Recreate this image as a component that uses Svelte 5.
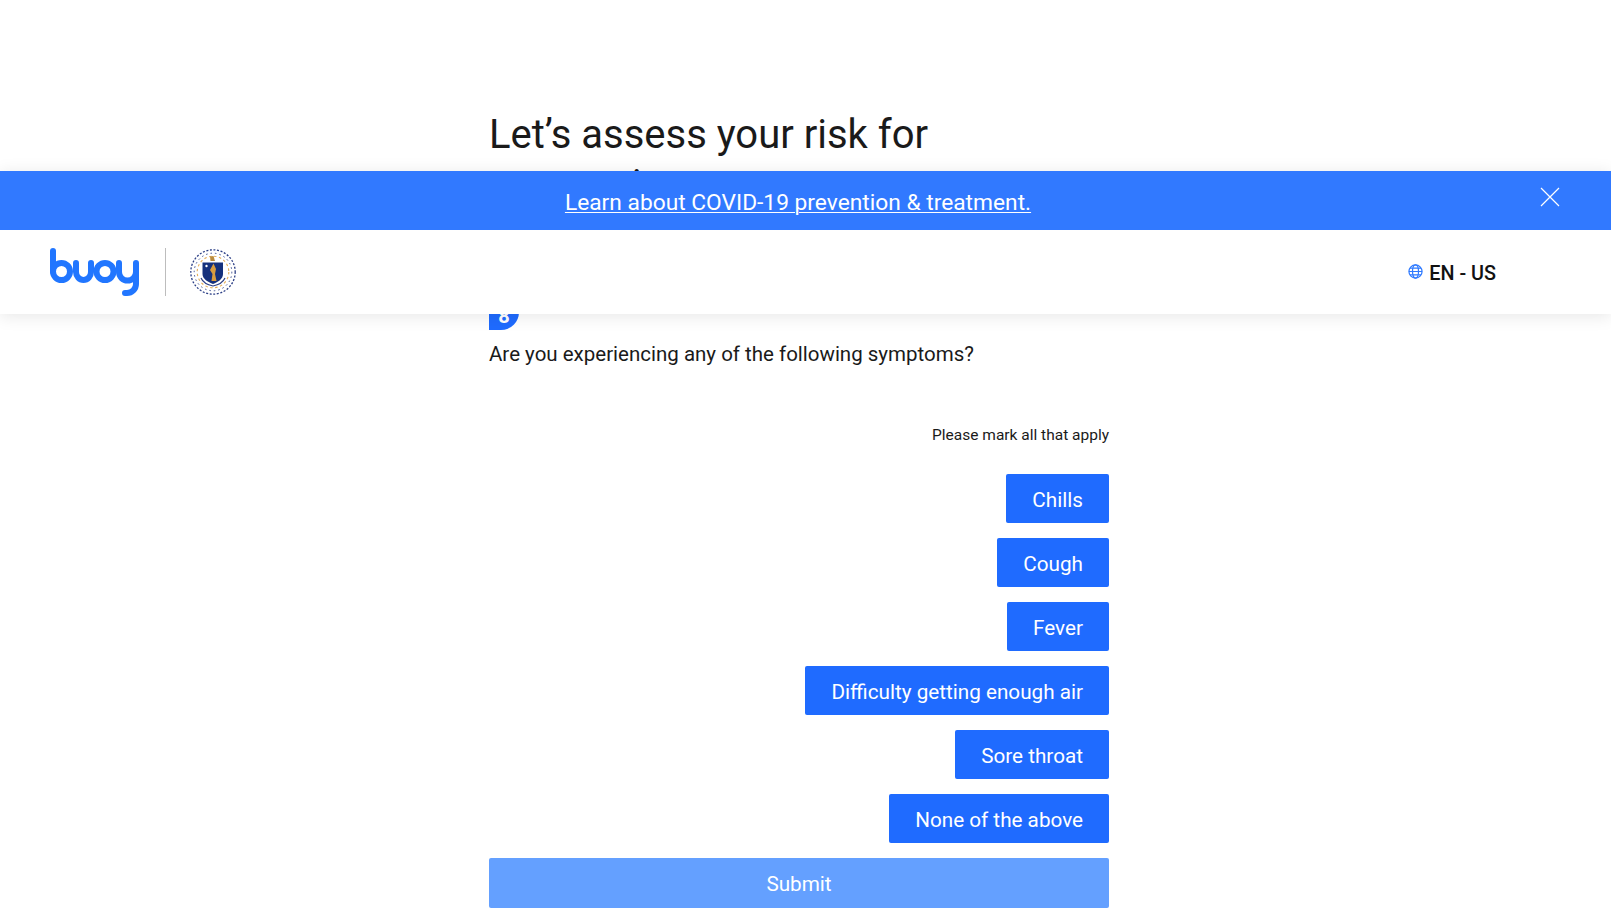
<script>
  const options = ['Chills', 'Cough', 'Fever', 'Difficulty getting enough air', 'Sore throat', 'None of the above'];
</script>

<div class="page">
  <main class="content">
    <h1>Let’s assess your risk for coronavirus</h1>
    <div class="badge-row"><span class="badge"><span class="num">8</span></span></div>
    <p class="question">Are you experiencing any of the following symptoms?</p>
    <p class="hint">Please mark all that apply</p>
    <div class="options">
      {#each options as o}
        <button class="opt">{o}</button>
      {/each}
    </div>
    <button class="submit">Submit</button>
  </main>

  <div class="top">
    <div class="banner">
      <a href="#covid">Learn about COVID-19 prevention &amp; treatment.</a>
      <svg class="close" viewBox="0 0 20 20" width="20" height="20"><path d="M1 1L19 19M19 1L1 19" stroke="#fff" stroke-width="1.2" fill="none"/></svg>
    </div>
    <header>
      <div class="logos">
        <svg class="buoy" viewBox="0 0 90 48" width="90" height="48" fill="none" stroke="#2176ff" stroke-width="6" stroke-linecap="round" stroke-linejoin="round">
          <path d="M3 3V23.500"/>
          <circle cx="11.500" cy="23.500" r="8.500"/>
          <path d="M26 15V24A7.500 8 0 0 0 41 24V15"/>
          <circle cx="55" cy="23.500" r="8.500"/>
          <path d="M69 15V24A8.500 8.500 0 0 0 86 24V15V36A9 9 0 0 1 77 45H75"/>
        </svg>
        <span class="divider"></span>
        <svg class="seal" viewBox="0 0 46 46" width="46" height="46" fill="none">
          <circle cx="23" cy="23" r="22.200" stroke="#2c3f86" stroke-width="1.300" stroke-dasharray="2 1.600"/>
          <circle cx="23" cy="23" r="18.800" stroke="#2c3f86" stroke-width=".9" stroke-dasharray="1.500 3"/>
          <circle cx="23" cy="23" r="15.800" stroke="#e6ad55" stroke-width="1.100" stroke-dasharray="2.500 2.500"/>
          <path d="M12.500 13.500H33V25C33 30 28 33 23 35C18 33 12.500 30 12.500 25Z" fill="#15307c"/>
          <path d="M23.500 14.500L26 20L25 25L26.500 32H21.500L22.500 25L20 21Z" fill="#d99c3f"/>
          <path d="M20 7.500L23.500 7L25 12H20.500Z" fill="#b98a3c"/>
          <path d="M11 29C13 33.500 18 36 23 37C28 36 33 33.500 35 29" stroke="#2c3f86" stroke-width="1.200"/>
          <circle cx="16.500" cy="17" r="1.200" fill="#fff"/>
        </svg>
      </div>
      <div class="lang">
        <svg viewBox="0 0 16 16" width="15" height="15" fill="none" stroke="#2f7aff" stroke-width="1.300">
          <circle cx="8" cy="8" r="7"/>
          <ellipse cx="8" cy="8" rx="3.200" ry="7"/>
          <path d="M1 8H15M2 4.500H14M2 11.500H14"/>
        </svg>
        <span>EN - US</span>
      </div>
    </header>
  </div>
</div>

<style>
  :global(body) { margin: 0; background: #fff; font-family: Roboto, "Liberation Sans", sans-serif; }
  .page { height: 920px; overflow: hidden; position: relative; }
  .content { width: 620px; margin-left: 489px; display: flex; flex-direction: column; color: #1a1a1a; }
  h1 { font-size: 40px; font-weight: 400; line-height: 50px; margin: 110px 0 0; width: 460px; }
  .badge-row { margin-top: 90px; height: 30px; }
  .badge { display: flex; width: 30px; height: 30px; background: #1f6bff; border-radius: 0 0 18px 0; color: #fff; font-weight: 700; font-size: 20px; align-items: center; justify-content: center; }
  .num { position: relative; top: 1px; }
  .question { font-size: 20.500px; line-height: 28px; margin: 10px 0 0; }
  .hint { font-size: 15.500px; line-height: 20px; margin: 57px 0 0; text-align: right; }
  .options { display: flex; flex-direction: column; align-items: flex-end; gap: 15px; margin-top: 29px; }
  button { font-family: inherit; border: 0; color: #fff; font-size: 20.700px; border-radius: 2px; height: 49px; padding: 2px 26px 0; }
  .opt { background: #1f6bff; }
  .submit { background: #64a0ff; margin-top: 15px; width: 620px; height: 50px; }
  .top { position: absolute; left: 0; right: 0; top: 171px; box-shadow: 0 2px 16px rgba(0,0,0,.1); }
  .banner { background: #3179ff; height: 59px; display: flex; align-items: center; justify-content: center; position: relative; padding-right: 15px; box-sizing: border-box; }
  .banner a { color: #fff; font-size: 22.750px; text-decoration: underline; text-underline-offset: 2px; text-decoration-thickness: 1px; position: relative; top: 2px; }
  .close { position: absolute; right: 51px; top: 16px; }
  header { background: #fff; height: 84px; display: flex; align-items: center; justify-content: space-between; padding: 0 115px 0 50px; }
  .logos { display: flex; align-items: center; }
  .divider { width: 1px; height: 48px; background: #bdbdbd; margin: 0 24px 0 25px; }
  .lang { display: flex; align-items: center; gap: 6px; font-size: 19.800px; font-weight: 500; color: #111; }
  .lang svg { position: relative; top: -1px; }
  .lang span { position: relative; top: 1px; }
</style>
